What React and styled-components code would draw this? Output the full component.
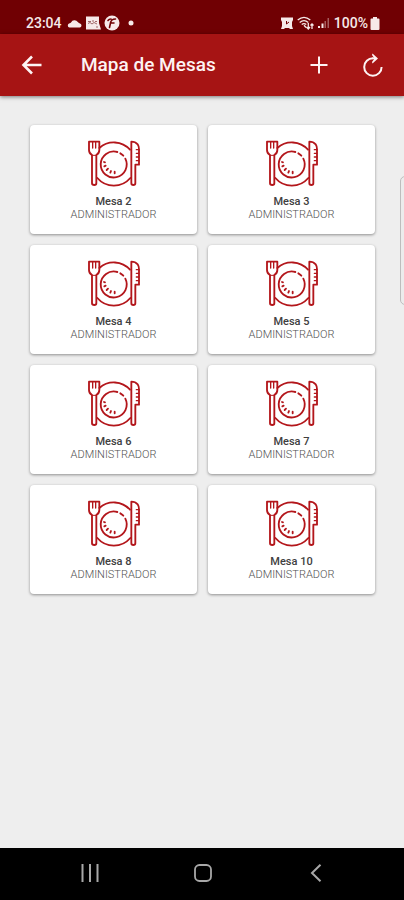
import styled, { createGlobalStyle } from 'styled-components';

const GlobalStyle = createGlobalStyle`
  * {
    box-sizing: border-box;
  }
  body {
    margin: 0;
    background: #eeeeee;
    font-family: Roboto, 'Liberation Sans', sans-serif;
  }
`;

const Screen = styled.div`
  display: flex;
  flex-direction: column;
  min-height: 100vh;
`;

const StatusBar = styled.div`
  display: flex;
  justify-content: space-between;
  align-items: flex-end;
  height: 34px;
  padding: 0 24px 3px 26px;
  background: #700003;
  color: #f6e9e9;
`;

const StatusGroup = styled.div`
  display: flex;
  align-items: center;
  gap: ${({ $gap }) => $gap}px;
  font-size: 14px;
  font-weight: 500;
  line-height: 16px;
`;

const Clock = styled.time`
  margin-right: 2px;
`;

const Indicator = styled.span`
  display: flex;
  margin-left: 5px;
`;

const AppBar = styled.header`
  display: flex;
  align-items: center;
  height: 62px;
  padding: 0 16px 0 17px;
  background: #a61414;
  color: #fdf3f3;
  box-shadow: 0 1px 4px rgba(0, 0, 0, 0.5);
`;

const Title = styled.h1`
  flex: 1;
  margin: 0 0 0 34px;
  font-size: 19px;
  font-weight: 500;
  line-height: 24px;
`;

const IconButton = styled.button`
  display: flex;
  justify-content: center;
  align-items: center;
  width: 30px;
  height: 40px;
  padding: 0;
  border: none;
  background: none;
  color: inherit;
  cursor: pointer;
`;

const Actions = styled.div`
  display: flex;
  gap: 24px;
`;

const TableGrid = styled.main`
  flex: 1;
  display: grid;
  grid-template-columns: 1fr 1fr;
  align-content: start;
  gap: 11px;
  padding: 29px 29px 29px 30px;
`;

const TableCard = styled.button`
  display: flex;
  flex-direction: column;
  align-items: center;
  padding: 15px 8px 13px;
  border: none;
  border-radius: 4px;
  background: #ffffff;
  box-shadow: 0 1px 3px rgba(0, 0, 0, 0.4);
  font-family: inherit;
  font-size: 11px;
  line-height: 13px;
  cursor: pointer;
`;

const TableName = styled.span`
  margin-top: 7px;
  font-weight: 500;
  color: #404040;
`;

const TableOwner = styled.span`
  font-weight: 300;
  color: #505050;
`;

const EdgeHandle = styled.div`
  position: fixed;
  top: 176px;
  right: -8px;
  width: 12px;
  height: 129px;
  border: 1px solid #bdbdbd;
  border-radius: 5px;
  background: #ececec;
`;

const SystemNav = styled.nav`
  display: grid;
  grid-template-columns: repeat(3, 1fr);
  justify-items: center;
  align-items: center;
  height: 52px;
  padding: 0 32px 2px 34px;
  background: #000000;
  color: #a8a8a8;
`;

const PlateIcon = () => (
  <svg width="52" height="48" viewBox="0 0 156 144" fill="none" stroke="#b3161b" strokeWidth="5.5" strokeLinecap="round" strokeLinejoin="round">
    <path d="M34 24A65 65 0 0 1 126 29M28 114A65 65 0 0 0 127 114" />
    <path d="M88 36A39 39 0 1 0 112 56" />
    <path d="M97 40A39 39 0 0 1 106 47" />
    <path d="M48 66L51 67M49 79L53 77M56 90L60 86M67 98L69 93M80 100L80 95" />
    <path d="M3 5H34V30Q34 40 25 45V130Q25 135 19 135Q12 135 12 130V45Q3 40 3 30Z" />
    <path d="M14 6V24M23 6V24" strokeWidth="4" />
    <path d="M12 46H25" strokeWidth="3" />
    <path d="M142 76V130Q142 135 136 135Q130 135 130 130V5Q142 5 149 13Q153 19 153 28V74H142" />
    <path d="M145 29H152M145 40H152M145 51H152M145 62H152" strokeWidth="4" />
  </svg>
);

const CloudIcon = () => (
  <svg width="15" height="10" viewBox="0 0 15 10" fill="currentColor">
    <path d="M2.5 9.5A2.2 2.2 0 0 1 2.6 5.2Q3.5 5 4 4.4A4 4 0 0 1 10.8 4Q12 5.4 13 5.6A2 2 0 0 1 12.8 9.5Z" />
  </svg>
);

const PictureIcon = () => (
  <svg width="16" height="14" viewBox="0 0 16 14">
    <path d="M1 0.5H14V7L16 13.5H1Z" fill="currentColor" />
    <path d="M3 5.5H6M7 5H9M10 5.5H12M3 7.5L5 6.5L7 8L9 6.5L12 8M12 10V12" stroke="#a2686a" fill="none" />
  </svg>
);

const BadgeIcon = () => (
  <svg width="16" height="16" viewBox="0 0 16 16">
    <circle cx="8" cy="8" r="7.5" fill="currentColor" />
    <path d="M5.5 12.5L6.5 8Q7 4 11.5 4M4 5.5Q5 4 7 4M7.5 8H10" stroke="#700003" strokeWidth="1.6" fill="none" strokeLinecap="round" />
  </svg>
);

const DotIcon = () => (
  <svg width="6" height="6" viewBox="0 0 6 6">
    <circle cx="3" cy="3" r="2.5" fill="currentColor" />
  </svg>
);

const AlarmIcon = () => (
  <svg width="12" height="12" viewBox="0 0 12 12">
    <path d="M0 0.5H12V3L11 5V9L12 12H9L8 11H4L3 12H0L1 9V5L0 3Z" fill="currentColor" />
    <path d="M5.5 4V7L8 5" stroke="#700003" fill="none" />
  </svg>
);

const WifiIcon = () => (
  <svg width="17" height="14" viewBox="0 0 17 14" fill="none" stroke="currentColor" strokeWidth="1.3">
    <path d="M0.7 4Q7 -1.4 13.3 4M2.7 6.4Q7 2.8 11.3 6.4M4.7 8.6Q7 6.8 9.3 8.6" />
    <path d="M7 9.2L9 11.5M11.3 7V12.5M9.5 11L11.3 13L13 11M15 13V8M13.5 9.5L15 8L16.5 9.5" />
  </svg>
);

const SignalIcon = () => (
  <svg width="12" height="12" viewBox="0 0 12 12" fill="currentColor">
    <path d="M0 9H2V11H0ZM3.5 6.5H5.5V11H3.5Z" />
    <path d="M6.5 4H8V11H6.5ZM9.5 1H11V11H9.5Z" opacity="0.4" />
  </svg>
);

const BatteryIcon = () => (
  <svg width="10" height="13" viewBox="0 0 10 13" fill="currentColor">
    <path d="M3 0H7V1.5H8.5Q9.5 1.5 9.5 2.5V12Q9.5 13 8.5 13H1.5Q0.5 13 0.5 12V2.5Q0.5 1.5 1.5 1.5H3Z" />
  </svg>
);

const BackArrowIcon = () => (
  <svg width="22" height="20" viewBox="0 0 22 20" fill="none" stroke="currentColor" strokeWidth="2.6">
    <path d="M20.5 10H2.5M11 1.5L2.5 10L11 18.5" />
  </svg>
);

const PlusIcon = () => (
  <svg width="18" height="18" viewBox="0 0 18 18" fill="none" stroke="currentColor" strokeWidth="2">
    <path d="M9 0.5V17.5M0.5 9H17.5" />
  </svg>
);

const ReloadIcon = () => (
  <svg width="20" height="24" viewBox="0 0 20 24" fill="none" stroke="currentColor" strokeWidth="2">
    <path d="M18.6 14A8.7 8.7 0 1 1 10 5.3" />
    <path d="M9.5 0.5L15 5.5L9.5 10.5L9 9L11.5 5.5L9 2Z" fill="currentColor" stroke="none" />
    <path d="M9.5 5.3H13" />
  </svg>
);

const RecentsIcon = () => (
  <svg width="18" height="18" viewBox="0 0 18 18" stroke="currentColor" strokeWidth="2">
    <path d="M1.5 0V18M9 0V18M16.5 0V18" />
  </svg>
);

const HomeIcon = () => (
  <svg width="18" height="18" viewBox="0 0 18 18" fill="none" stroke="currentColor" strokeWidth="1.8">
    <rect x="1" y="1" width="16" height="16" rx="4.5" />
  </svg>
);

const NavBackIcon = () => (
  <svg width="12" height="18" viewBox="0 0 12 18" fill="none" stroke="currentColor" strokeWidth="2">
    <path d="M10.5 0.7L2 9L10.5 17.3" />
  </svg>
);

const tables = [2, 3, 4, 5, 6, 7, 8, 10].map((number) => ({
  number,
  owner: 'ADMINISTRADOR',
}));

export default function App() {
  return (
    <Screen>
      <GlobalStyle />
      <StatusBar>
        <StatusGroup $gap={3}>
          <Clock>23:04</Clock>
          <CloudIcon />
          <PictureIcon />
          <BadgeIcon />
          <Indicator>
            <DotIcon />
          </Indicator>
        </StatusGroup>
        <StatusGroup $gap={4}>
          <AlarmIcon />
          <WifiIcon />
          <SignalIcon />
          <StatusGroup $gap={2}>
            <span>100%</span>
            <BatteryIcon />
          </StatusGroup>
        </StatusGroup>
      </StatusBar>
      <AppBar>
        <IconButton aria-label="Voltar">
          <BackArrowIcon />
        </IconButton>
        <Title>Mapa de Mesas</Title>
        <Actions>
          <IconButton aria-label="Adicionar">
            <PlusIcon />
          </IconButton>
          <IconButton aria-label="Atualizar">
            <ReloadIcon />
          </IconButton>
        </Actions>
      </AppBar>
      <TableGrid>
        {tables.map(({ number, owner }) => (
          <TableCard key={number}>
            <PlateIcon />
            <TableName>Mesa {number}</TableName>
            <TableOwner>{owner}</TableOwner>
          </TableCard>
        ))}
      </TableGrid>
      <EdgeHandle />
      <SystemNav>
        <IconButton aria-label="Recentes">
          <RecentsIcon />
        </IconButton>
        <IconButton aria-label="Início">
          <HomeIcon />
        </IconButton>
        <IconButton aria-label="Voltar">
          <NavBackIcon />
        </IconButton>
      </SystemNav>
    </Screen>
  );
}
